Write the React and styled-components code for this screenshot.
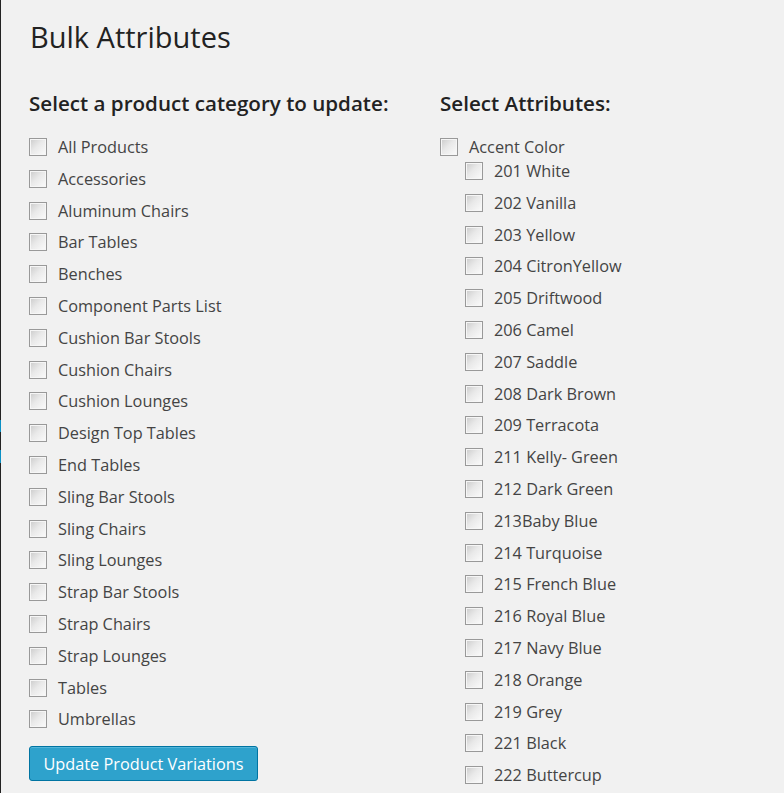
import React from "react";
import styled, { createGlobalStyle } from "styled-components";

const Global = createGlobalStyle`
  html, body { margin: 0; padding: 0; background: #f1f1f1; }
  body { font-family: "Open Sans", "Liberation Sans", sans-serif; color: #444; }
  ul { list-style: none; margin: 0; padding: 0; }
`;

const Page = styled.div`
  display: flex;
  min-height: 793px;
  background: #f1f1f1;
`;

const Edge = styled.div`
  position: relative;
  width: 1px;
  flex: none;
  background: #222;
`;

const EdgeMark = styled.span`
  position: absolute;
  left: 0;
  width: 1px;
  top: ${(p) => p.$top}px;
  height: ${(p) => p.$h}px;
  background: #0a8fc4;
`;

const Main = styled.div`
  flex: 1;
  padding: 0 0 0 28px;
`;

const Title = styled.h1`
  margin: 0;
  padding: 17px 0 0 1px;
  font-size: 29px;
  line-height: 40px;
  font-weight: 400;
  color: #222;
`;

const Columns = styled.div`
  display: grid;
  grid-template-columns: 411px 1fr;
  margin-top: 32px;
`;

const Column = styled.section``;

const Heading = styled.h2`
  margin: 0 0 18px;
  font-size: 20.6px;
  line-height: 28px;
  font-weight: 600;
  color: #222;
`;

const Item = styled.li`
  margin-bottom: 7.8px;
`;

const Label = styled.label`
  display: flex;
  align-items: center;
  gap: 11px;
  height: 24px;
  font-size: 16.3px;
  color: #444;
`;

const Box = styled.span`
  box-sizing: border-box;
  width: 18px;
  height: 18px;
  flex: none;
  border: 1px solid #999;
  background: linear-gradient(135deg, #cbcbcb 0%, #e9e9e9 45%, #fbfbfb 100%);
  box-shadow: inset 0 0 0 1px #f6f6f6;
`;

const SubList = styled.ul`
  padding-left: 25px;
`;

const Button = styled.button`
  margin-top: 7px;
  height: 35px;
  width: 229px;
  padding: 0 12px;
  border: 1px solid #0074a2;
  border-radius: 3px;
  background: #2ea2cc;
  color: #fff;
  font-family: "Open Sans", "Liberation Sans", sans-serif;
  font-size: 16.3px;
  box-shadow: inset 0 1px 0 rgba(120, 200, 230, 0.5);
`;

const categories = [
  "All Products",
  "Accessories",
  "Aluminum Chairs",
  "Bar Tables",
  "Benches",
  "Component Parts List",
  "Cushion Bar Stools",
  "Cushion Chairs",
  "Cushion Lounges",
  "Design Top Tables",
  "End Tables",
  "Sling Bar Stools",
  "Sling Chairs",
  "Sling Lounges",
  "Strap Bar Stools",
  "Strap Chairs",
  "Strap Lounges",
  "Tables",
  "Umbrellas",
];

const colors = [
  "201 White",
  "202 Vanilla",
  "203 Yellow",
  "204 CitronYellow",
  "205 Driftwood",
  "206 Camel",
  "207 Saddle",
  "208 Dark Brown",
  "209 Terracota",
  "211 Kelly- Green",
  "212 Dark Green",
  "213Baby Blue",
  "214 Turquoise",
  "215 French Blue",
  "216 Royal Blue",
  "217 Navy Blue",
  "218 Orange",
  "219 Grey",
  "221 Black",
  "222 Buttercup",
];

function Check({ children }) {
  return (
    <Label>
      <Box />
      <span>{children}</span>
    </Label>
  );
}

export default function App() {
  return (
    <>
      <Global />
      <Page>
        <Edge>
          <EdgeMark $top={420} $h={12} />
          <EdgeMark $top={450} $h={13} />
        </Edge>
        <Main>
          <Title>Bulk Attributes</Title>
          <Columns>
            <Column>
              <Heading>Select a product category to update:</Heading>
              <ul>
                {categories.map((c) => (
                  <Item key={c}>
                    <Check>{c}</Check>
                  </Item>
                ))}
              </ul>
              <Button>Update Product Variations</Button>
            </Column>
            <Column>
              <Heading>Select Attributes:</Heading>
              <ul>
                <li>
                  <Check>Accent Color</Check>
                  <SubList>
                    {colors.map((c) => (
                      <Item key={c}>
                        <Check>{c}</Check>
                      </Item>
                    ))}
                  </SubList>
                </li>
              </ul>
            </Column>
          </Columns>
        </Main>
      </Page>
    </>
  );
}
